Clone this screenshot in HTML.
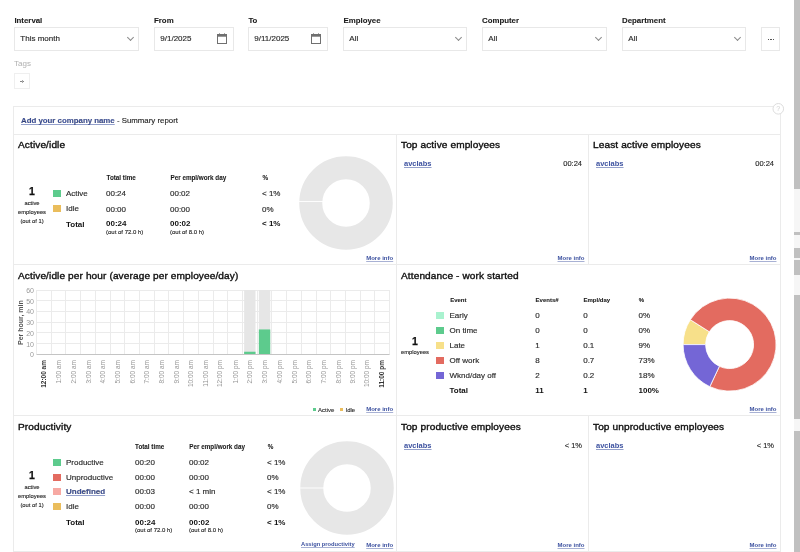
<!DOCTYPE html>
<html><head><meta charset="utf-8">
<style>
*{box-sizing:border-box;margin:0;padding:0}
html,body{width:800px;height:552px;overflow:hidden;background:#fff}
body{font-family:"Liberation Sans",sans-serif;color:#222;position:relative;-webkit-font-smoothing:antialiased}
#wrap{position:absolute;left:0;top:0;width:800px;height:552px;will-change:transform}
.a{position:absolute;white-space:nowrap;line-height:1}
.lbl{font-size:7.85px;font-weight:bold;color:#1a1a1a;-webkit-text-stroke:0.1px #1a1a1a}
.inp{position:absolute;top:27px;height:24px;border:1px solid #e8e8e8;background:#fff}
.chev{position:absolute;width:5px;height:5px;border-right:1px solid #8a8a8a;border-bottom:1px solid #8a8a8a;transform:rotate(45deg)}
.cal{position:absolute;width:10px;height:10.5px;border:1px solid #6a6a6a;border-top:3px solid #6a6a6a}
.box{position:absolute;border:1px solid #ebebeb}
.vl{position:absolute;width:1px;background:#ebebeb}
.hl{position:absolute;height:1px;background:#ebebeb}
.title{font-size:9px;color:#111;letter-spacing:0.1px;-webkit-text-stroke:0.35px #111;transform-origin:0 50%;transform:scaleX(1.12)}
.lnk{color:#3d52a0;font-weight:bold;text-decoration:underline;text-decoration-color:rgba(61,82,160,0.55)}
.mi{font-size:6px;font-weight:bold;color:#3d52a0;text-decoration:underline;text-decoration-color:rgba(61,82,160,0.45)}
.th{font-size:6.3px;font-weight:bold;color:#1a1a1a;-webkit-text-stroke:0.08px #1a1a1a}
.td{font-size:8px;color:#2a2a2a;-webkit-text-stroke:0.15px #2a2a2a}
.tb{font-size:8px;font-weight:bold;color:#111}
.sm{font-size:6px;color:#222;-webkit-text-stroke:0.12px #222}
.big{font-size:10.5px;font-weight:bold;color:#111;-webkit-text-stroke:0.25px #111}
.sq{position:absolute;width:8px;height:7px}
.yl{font-size:7px;color:#999}
.xl{position:absolute;width:0;height:0}
.xl span{position:absolute;right:0;top:0;transform-origin:100% 0;transform:rotate(-90deg);font-size:6.5px;color:#959595;line-height:7px;white-space:nowrap}
</style></head><body><div id="wrap">
<div class="a lbl" style="left:14.40px;top:16.69px;">Interval</div>
<div class="a lbl" style="left:154.00px;top:16.69px;">From</div>
<div class="a lbl" style="left:248.40px;top:16.69px;">To</div>
<div class="a lbl" style="left:343.50px;top:16.69px;">Employee</div>
<div class="a lbl" style="left:482.00px;top:16.69px;">Computer</div>
<div class="a lbl" style="left:622.00px;top:16.69px;">Department</div>
<div class="inp" style="left:14px;width:125px"></div>
<div class="a td" style="left:20.30px;top:35.00px;color:#2a2a2a">This month</div>
<div class="chev" style="left:127.5px;top:35.3px"></div>
<div class="inp" style="left:154px;width:80px"></div>
<div class="a td" style="left:160.30px;top:35.00px;color:#2a2a2a">9/1/2025</div>
<svg style="position:absolute;left:217px;top:32px" width="11" height="13"><rect x="0.5" y="2.5" width="9" height="9" fill="none" stroke="#707070" stroke-width="1"/><rect x="0" y="2" width="10" height="2.7" fill="#707070"/><rect x="2" y="1" width="1" height="1" fill="#aaa"/><rect x="7" y="1" width="1" height="1" fill="#aaa"/></svg>
<div class="inp" style="left:248px;width:80px"></div>
<div class="a td" style="left:254.30px;top:35.00px;color:#2a2a2a">9/11/2025</div>
<svg style="position:absolute;left:311px;top:32px" width="11" height="13"><rect x="0.5" y="2.5" width="9" height="9" fill="none" stroke="#707070" stroke-width="1"/><rect x="0" y="2" width="10" height="2.7" fill="#707070"/><rect x="2" y="1" width="1" height="1" fill="#aaa"/><rect x="7" y="1" width="1" height="1" fill="#aaa"/></svg>
<div class="inp" style="left:343px;width:124px"></div>
<div class="a td" style="left:349.30px;top:35.00px;color:#2a2a2a">All</div>
<div class="chev" style="left:455.5px;top:35.3px"></div>
<div class="inp" style="left:482px;width:125px"></div>
<div class="a td" style="left:488.30px;top:35.00px;color:#2a2a2a">All</div>
<div class="chev" style="left:595.5px;top:35.3px"></div>
<div class="inp" style="left:622px;width:124px"></div>
<div class="a td" style="left:628.30px;top:35.00px;color:#2a2a2a">All</div>
<div class="chev" style="left:734.5px;top:35.3px"></div>
<div class="inp" style="left:761px;width:19px"></div>
<div style="position:absolute;left:768px;top:38.6px;width:1.3px;height:1.3px;background:#555"></div>
<div style="position:absolute;left:770.3px;top:38.6px;width:1.3px;height:1.3px;background:#555"></div>
<div style="position:absolute;left:772.6px;top:38.6px;width:1.3px;height:1.3px;background:#555"></div>
<div class="a td" style="left:14.00px;top:60.00px;color:#b0b0b0;-webkit-text-stroke:0">Tags</div>
<div class="a" style="left:14px;top:73px;width:16px;height:16px;border:1px solid #efefef"></div>
<div style="position:absolute;left:20.3px;top:81px;width:3.6px;height:1px;background:#888"></div><div style="position:absolute;left:21.6px;top:80px;width:1px;height:2.6px;background:#aaa"></div>
<div class="box" style="left:13px;top:106px;width:768px;height:446px"></div>
<div class="hl" style="left:13px;top:134px;width:768px"></div>
<div class="a" style="left:21px;top:117.2px;font-size:7.85px;color:#222;-webkit-text-stroke:0.12px #222"><span class="lnk">Add your company name</span> - Summary report</div>
<svg style="position:absolute;left:771px;top:102px" width="15" height="15"><circle cx="7.3" cy="6.8" r="5.3" fill="#fff" stroke="#dcdcdc" stroke-width="1"/><text x="7.3" y="9.4" font-size="7" font-family="Liberation Sans" fill="#d0d0d0" text-anchor="middle">?</text></svg>
<div class="vl" style="left:396px;top:134px;height:418px"></div>
<div class="vl" style="left:588px;top:134px;height:130px"></div>
<div class="vl" style="left:588px;top:415px;height:137px"></div>
<div class="hl" style="left:13px;top:264px;width:768px"></div>
<div class="hl" style="left:13px;top:415px;width:768px"></div>
<div class="a title" style="left:18.00px;top:141.20px;">Active/idle</div>
<div class="a big" style="left:22.00px;width:20px;text-align:center;top:185.52px;">1</div>
<div class="a sm" style="left:10.00px;width:44px;text-align:center;top:200.77px;font-size:5.8px;">active</div>
<div class="a sm" style="left:10.00px;width:44px;text-align:center;top:209.67px;font-size:5.8px;">employees</div>
<div class="a sm" style="left:10.00px;width:44px;text-align:center;top:218.57px;font-size:5.8px;">(out of 1)</div>
<div class="sq" style="left:53px;top:189.7px;background:#5dcb8d"></div>
<div class="a td" style="left:66.00px;top:190.00px;">Active</div>
<div class="sq" style="left:53px;top:205.3px;background:#eabd5c"></div>
<div class="a td" style="left:66.00px;top:205.00px;">Idle</div>
<div class="a tb" style="left:66.00px;top:221.00px;">Total</div>
<div class="a th" style="left:106.50px;top:175.32px;">Total time</div>
<div class="a th" style="left:170.50px;top:175.32px;">Per empl/work day</div>
<div class="a th" style="left:262.50px;top:175.32px;">%</div>
<div class="a td" style="left:106.00px;top:190.00px;">00:24</div>
<div class="a td" style="left:106.00px;top:206.00px;">00:00</div>
<div class="a tb" style="left:106.00px;top:220.00px;">00:24</div>
<div class="a td" style="left:170.00px;top:190.00px;">00:02</div>
<div class="a td" style="left:170.00px;top:206.00px;">00:00</div>
<div class="a tb" style="left:170.00px;top:220.00px;">00:02</div>
<div class="a td" style="left:262.00px;top:190.00px;">&lt; 1%</div>
<div class="a td" style="left:262.00px;top:206.00px;">0%</div>
<div class="a tb" style="left:262.00px;top:220.00px;">&lt; 1%</div>
<div class="a sm" style="left:106.00px;top:228.97px;">(out of 72.0 h)</div>
<div class="a sm" style="left:170.00px;top:228.97px;">(out of 8.0 h)</div>
<svg style="position:absolute;left:296.3px;top:153.3px" width="100" height="100"><circle cx="50" cy="50" r="35.25" fill="none" stroke="#e7e7e7" stroke-width="23"/><line x1="2" y1="48.5" x2="27" y2="48.5" stroke="#fff" stroke-width="0.9"/></svg>
<div class="a mi" style="left:366.20px;top:255.27px;">More info</div>
<div class="a title" style="left:401.30px;top:141.20px;">Top active employees</div>
<div class="a lnk" style="left:404.00px;top:160.34px;font-size:7.5px;">avclabs</div>
<div class="a td" style="left:532.00px;width:50px;text-align:right;top:160.34px;font-size:7.5px;">00:24</div>
<div class="a mi" style="left:557.50px;top:255.27px;">More info</div>
<div class="a title" style="left:592.60px;top:141.20px;">Least active employees</div>
<div class="a lnk" style="left:596.00px;top:160.34px;font-size:7.5px;">avclabs</div>
<div class="a td" style="left:724.00px;width:50px;text-align:right;top:160.34px;font-size:7.5px;">00:24</div>
<div class="a mi" style="left:749.50px;top:255.27px;">More info</div>
<div class="a title" style="left:18.00px;top:272.40px;">Active/idle per hour (average per employee/day)</div>
<svg style="position:absolute;left:0;top:0" width="400" height="400"><line x1="36.5" y1="290.5" x2="389.6" y2="290.5" stroke="#ebebeb" stroke-width="1"/><line x1="36.5" y1="300.5" x2="389.6" y2="300.5" stroke="#ebebeb" stroke-width="1"/><line x1="36.5" y1="311.5" x2="389.6" y2="311.5" stroke="#ebebeb" stroke-width="1"/><line x1="36.5" y1="322.5" x2="389.6" y2="322.5" stroke="#ebebeb" stroke-width="1"/><line x1="36.5" y1="332.5" x2="389.6" y2="332.5" stroke="#ebebeb" stroke-width="1"/><line x1="36.5" y1="343.5" x2="389.6" y2="343.5" stroke="#ebebeb" stroke-width="1"/><line x1="36.5" y1="290.0" x2="36.5" y2="354.3" stroke="#ebebeb" stroke-width="1"/><line x1="51.5" y1="290.0" x2="51.5" y2="354.3" stroke="#ebebeb" stroke-width="1"/><line x1="65.5" y1="290.0" x2="65.5" y2="354.3" stroke="#ebebeb" stroke-width="1"/><line x1="80.5" y1="290.0" x2="80.5" y2="354.3" stroke="#ebebeb" stroke-width="1"/><line x1="95.5" y1="290.0" x2="95.5" y2="354.3" stroke="#ebebeb" stroke-width="1"/><line x1="110.5" y1="290.0" x2="110.5" y2="354.3" stroke="#ebebeb" stroke-width="1"/><line x1="124.5" y1="290.0" x2="124.5" y2="354.3" stroke="#ebebeb" stroke-width="1"/><line x1="139.5" y1="290.0" x2="139.5" y2="354.3" stroke="#ebebeb" stroke-width="1"/><line x1="154.5" y1="290.0" x2="154.5" y2="354.3" stroke="#ebebeb" stroke-width="1"/><line x1="168.5" y1="290.0" x2="168.5" y2="354.3" stroke="#ebebeb" stroke-width="1"/><line x1="183.5" y1="290.0" x2="183.5" y2="354.3" stroke="#ebebeb" stroke-width="1"/><line x1="198.5" y1="290.0" x2="198.5" y2="354.3" stroke="#ebebeb" stroke-width="1"/><line x1="213.5" y1="290.0" x2="213.5" y2="354.3" stroke="#ebebeb" stroke-width="1"/><line x1="227.5" y1="290.0" x2="227.5" y2="354.3" stroke="#ebebeb" stroke-width="1"/><line x1="242.5" y1="290.0" x2="242.5" y2="354.3" stroke="#ebebeb" stroke-width="1"/><line x1="257.5" y1="290.0" x2="257.5" y2="354.3" stroke="#ebebeb" stroke-width="1"/><line x1="271.5" y1="290.0" x2="271.5" y2="354.3" stroke="#ebebeb" stroke-width="1"/><line x1="286.5" y1="290.0" x2="286.5" y2="354.3" stroke="#ebebeb" stroke-width="1"/><line x1="301.5" y1="290.0" x2="301.5" y2="354.3" stroke="#ebebeb" stroke-width="1"/><line x1="316.5" y1="290.0" x2="316.5" y2="354.3" stroke="#ebebeb" stroke-width="1"/><line x1="330.5" y1="290.0" x2="330.5" y2="354.3" stroke="#ebebeb" stroke-width="1"/><line x1="345.5" y1="290.0" x2="345.5" y2="354.3" stroke="#ebebeb" stroke-width="1"/><line x1="360.5" y1="290.0" x2="360.5" y2="354.3" stroke="#ebebeb" stroke-width="1"/><line x1="374.5" y1="290.0" x2="374.5" y2="354.3" stroke="#ebebeb" stroke-width="1"/><line x1="389.5" y1="290.0" x2="389.5" y2="354.3" stroke="#ebebeb" stroke-width="1"/><rect x="244.13" y="290.0" width="11.4" height="64.30" fill="#e6e6e6"/><rect x="244.13" y="351.73" width="11.4" height="2.57" fill="#5dcb8d"/><rect x="258.84" y="290.0" width="11.4" height="64.30" fill="#e6e6e6"/><rect x="258.84" y="329.44" width="11.4" height="24.86" fill="#5dcb8d"/><line x1="36.5" y1="354.5" x2="389.6" y2="354.5" stroke="#c4c4c4" stroke-width="1"/></svg>
<div class="a yl" style="left:14.00px;width:20px;text-align:right;top:286.98px;">60</div>
<div class="a yl" style="left:14.00px;width:20px;text-align:right;top:297.70px;">50</div>
<div class="a yl" style="left:14.00px;width:20px;text-align:right;top:308.41px;">40</div>
<div class="a yl" style="left:14.00px;width:20px;text-align:right;top:319.13px;">30</div>
<div class="a yl" style="left:14.00px;width:20px;text-align:right;top:329.85px;">20</div>
<div class="a yl" style="left:14.00px;width:20px;text-align:right;top:340.56px;">10</div>
<div class="a yl" style="left:14.00px;width:20px;text-align:right;top:351.28px;">0</div>
<div class="xl" style="left:17px;top:345px"><span style="font-weight:bold;color:#555;font-size:7px;right:auto;left:0;transform-origin:0 0">Per hour, min</span></div>
<div class="xl" style="left:39.9px;top:360px"><span style="font-weight:bold;color:#333;">12:00 am</span></div>
<div class="xl" style="left:54.6px;top:360px"><span style="">1:00 am</span></div>
<div class="xl" style="left:69.3px;top:360px"><span style="">2:00 am</span></div>
<div class="xl" style="left:84.0px;top:360px"><span style="">3:00 am</span></div>
<div class="xl" style="left:98.7px;top:360px"><span style="">4:00 am</span></div>
<div class="xl" style="left:113.4px;top:360px"><span style="">5:00 am</span></div>
<div class="xl" style="left:128.1px;top:360px"><span style="">6:00 am</span></div>
<div class="xl" style="left:142.8px;top:360px"><span style="">7:00 am</span></div>
<div class="xl" style="left:157.6px;top:360px"><span style="">8:00 am</span></div>
<div class="xl" style="left:172.3px;top:360px"><span style="">9:00 am</span></div>
<div class="xl" style="left:187.0px;top:360px"><span style="">10:00 am</span></div>
<div class="xl" style="left:201.7px;top:360px"><span style="">11:00 am</span></div>
<div class="xl" style="left:216.4px;top:360px"><span style="">12:00 pm</span></div>
<div class="xl" style="left:231.1px;top:360px"><span style="">1:00 pm</span></div>
<div class="xl" style="left:245.8px;top:360px"><span style="">2:00 pm</span></div>
<div class="xl" style="left:260.5px;top:360px"><span style="">3:00 pm</span></div>
<div class="xl" style="left:275.3px;top:360px"><span style="">4:00 pm</span></div>
<div class="xl" style="left:290.0px;top:360px"><span style="">5:00 pm</span></div>
<div class="xl" style="left:304.7px;top:360px"><span style="">6:00 pm</span></div>
<div class="xl" style="left:319.4px;top:360px"><span style="">7:00 pm</span></div>
<div class="xl" style="left:334.1px;top:360px"><span style="">8:00 pm</span></div>
<div class="xl" style="left:348.8px;top:360px"><span style="">9:00 pm</span></div>
<div class="xl" style="left:363.5px;top:360px"><span style="">10:00 pm</span></div>
<div class="xl" style="left:378.2px;top:360px"><span style="font-weight:bold;color:#333;">11:00 pm</span></div>
<div class="sq" style="left:312.5px;top:407.8px;width:3px;height:3px;background:#5dcb8d"></div>
<div class="a sm" style="left:318.00px;top:406.57px;color:#333">Active</div>
<div class="sq" style="left:340px;top:407.8px;width:3px;height:3px;background:#eabd5c"></div>
<div class="a sm" style="left:345.50px;top:406.57px;color:#333">Idle</div>
<div class="a mi" style="left:366.20px;top:406.37px;">More info</div>
<div class="a title" style="left:401.20px;top:272.40px;">Attendance - work started</div>
<div class="a big" style="left:404.80px;width:20px;text-align:center;top:335.72px;">1</div>
<div class="a sm" style="left:395.00px;width:40px;text-align:center;top:349.87px;font-size:5.8px;">employees</div>
<div class="a th" style="left:450.20px;top:297.07px;font-size:6px;">Event</div>
<div class="a th" style="left:535.60px;top:297.07px;font-size:6px;">Events#</div>
<div class="a th" style="left:583.50px;top:297.07px;font-size:6px;">Empl/day</div>
<div class="a th" style="left:638.70px;top:297.07px;font-size:6px;">%</div>
<div class="sq" style="left:436px;top:312.2px;background:#a9f2cf"></div>
<div class="a td" style="left:449.50px;top:312.00px;">Early</div>
<div class="a td" style="left:535.20px;top:312.00px;">0</div>
<div class="a td" style="left:583.20px;top:312.00px;">0</div>
<div class="a td" style="left:638.50px;top:312.00px;">0%</div>
<div class="sq" style="left:436px;top:327.1px;background:#5dcb8d"></div>
<div class="a td" style="left:449.50px;top:327.00px;">On time</div>
<div class="a td" style="left:535.20px;top:327.00px;">0</div>
<div class="a td" style="left:583.20px;top:327.00px;">0</div>
<div class="a td" style="left:638.50px;top:327.00px;">0%</div>
<div class="sq" style="left:436px;top:342.0px;background:#f7e08a"></div>
<div class="a td" style="left:449.50px;top:342.00px;">Late</div>
<div class="a td" style="left:535.20px;top:342.00px;">1</div>
<div class="a td" style="left:583.20px;top:342.00px;">0.1</div>
<div class="a td" style="left:638.50px;top:342.00px;">9%</div>
<div class="sq" style="left:436px;top:357.2px;background:#e36b60"></div>
<div class="a td" style="left:449.50px;top:357.00px;">Off work</div>
<div class="a td" style="left:535.20px;top:357.00px;">8</div>
<div class="a td" style="left:583.20px;top:357.00px;">0.7</div>
<div class="a td" style="left:638.50px;top:357.00px;">73%</div>
<div class="sq" style="left:436px;top:371.9px;background:#7466d6"></div>
<div class="a td" style="left:449.50px;top:372.00px;">Wknd/day off</div>
<div class="a td" style="left:535.20px;top:372.00px;">2</div>
<div class="a td" style="left:583.20px;top:372.00px;">0.2</div>
<div class="a td" style="left:638.50px;top:372.00px;">18%</div>
<div class="a tb" style="left:449.50px;top:387.00px;">Total</div>
<div class="a tb" style="left:535.20px;top:387.00px;">11</div>
<div class="a tb" style="left:583.20px;top:387.00px;">1</div>
<div class="a tb" style="left:638.50px;top:387.00px;">100%</div>
<svg style="position:absolute;left:0;top:0" width="800" height="552"><path d="M683.10,344.60 A46.5,46.5 0 0 1 690.34,319.68 L709.34,331.74 A24,24 0 0 0 705.60,344.60 Z" fill="#f7e08a" stroke="#fff" stroke-width="0.8"/><path d="M690.34,319.68 A46.5,46.5 0 1 1 709.80,386.67 L719.38,366.32 A24,24 0 1 0 709.34,331.74 Z" fill="#e36b60" stroke="#fff" stroke-width="0.8"/><path d="M709.80,386.67 A46.5,46.5 0 0 1 683.10,344.60 L705.60,344.60 A24,24 0 0 0 719.38,366.32 Z" fill="#7466d6" stroke="#fff" stroke-width="0.8"/></svg>
<div class="a mi" style="left:749.50px;top:406.37px;">More info</div>
<div class="a title" style="left:18.00px;top:422.60px;">Productivity</div>
<div class="a big" style="left:22.00px;width:20px;text-align:center;top:470.12px;">1</div>
<div class="a sm" style="left:10.00px;width:44px;text-align:center;top:485.37px;font-size:5.8px;">active</div>
<div class="a sm" style="left:10.00px;width:44px;text-align:center;top:494.27px;font-size:5.8px;">employees</div>
<div class="a sm" style="left:10.00px;width:44px;text-align:center;top:503.17px;font-size:5.8px;">(out of 1)</div>
<div class="a th" style="left:135.00px;top:444.12px;">Total time</div>
<div class="a th" style="left:189.30px;top:444.12px;">Per empl/work day</div>
<div class="a th" style="left:267.70px;top:444.12px;">%</div>
<div class="sq" style="left:53px;top:458.9px;background:#5dcb8d"></div>
<div class="a td" style="left:66.00px;top:459.00px;">Productive</div>
<div class="a td" style="left:135.00px;top:459.00px;">00:20</div>
<div class="a td" style="left:189.00px;top:459.00px;">00:02</div>
<div class="a td" style="left:267.00px;top:459.00px;">&lt; 1%</div>
<div class="sq" style="left:53px;top:473.6px;background:#e36b60"></div>
<div class="a td" style="left:66.00px;top:474.00px;">Unproductive</div>
<div class="a td" style="left:135.00px;top:474.00px;">00:00</div>
<div class="a td" style="left:189.00px;top:474.00px;">00:00</div>
<div class="a td" style="left:267.00px;top:474.00px;">0%</div>
<div class="sq" style="left:53px;top:488.4px;background:#f7a9a3"></div>
<div class="a td" style="left:66.00px;top:488.00px;"><span class="lnk" style="font-size:8px">Undefined</span></div>
<div class="a td" style="left:135.00px;top:488.00px;">00:03</div>
<div class="a td" style="left:189.00px;top:488.00px;">&lt; 1 min</div>
<div class="a td" style="left:267.00px;top:488.00px;">&lt; 1%</div>
<div class="sq" style="left:53px;top:503.3px;background:#eabd5c"></div>
<div class="a td" style="left:66.00px;top:503.00px;">Idle</div>
<div class="a td" style="left:135.00px;top:503.00px;">00:00</div>
<div class="a td" style="left:189.00px;top:503.00px;">00:00</div>
<div class="a td" style="left:267.00px;top:503.00px;">0%</div>
<div class="a tb" style="left:66.00px;top:519.00px;">Total</div>
<div class="a tb" style="left:135.00px;top:519.00px;">00:24</div>
<div class="a tb" style="left:189.00px;top:519.00px;">00:02</div>
<div class="a tb" style="left:267.00px;top:519.00px;">&lt; 1%</div>
<div class="a sm" style="left:135.00px;top:526.97px;">(out of 72.0 h)</div>
<div class="a sm" style="left:189.00px;top:526.97px;">(out of 8.0 h)</div>
<svg style="position:absolute;left:296.5px;top:438.0px" width="100" height="100"><circle cx="50" cy="50" r="35.25" fill="none" stroke="#e7e7e7" stroke-width="23"/><line x1="2" y1="50" x2="27" y2="50" stroke="#fff" stroke-width="0.9"/></svg>
<div class="a mi" style="left:301.00px;top:541.79px;font-size:5.75px;">Assign productivity</div>
<div class="a mi" style="left:366.20px;top:541.67px;">More info</div>
<div class="a title" style="left:401.30px;top:422.70px;">Top productive employees</div>
<div class="a lnk" style="left:404.00px;top:441.84px;font-size:7.5px;">avclabs</div>
<div class="a td" style="left:532.00px;width:50px;text-align:right;top:441.84px;font-size:7.5px;">&lt; 1%</div>
<div class="a mi" style="left:557.50px;top:541.67px;">More info</div>
<div class="a title" style="left:592.60px;top:422.70px;">Top unproductive employees</div>
<div class="a lnk" style="left:596.00px;top:441.84px;font-size:7.5px;">avclabs</div>
<div class="a td" style="left:724.00px;width:50px;text-align:right;top:441.84px;font-size:7.5px;">&lt; 1%</div>
<div class="a mi" style="left:749.50px;top:541.67px;">More info</div>
<div style="position:absolute;left:794px;top:0;width:6px;height:552px;background:#f6f6f6"></div>
<div style="position:absolute;left:794px;top:0px;width:6px;height:189px;background:#c0c0c0"></div>
<div style="position:absolute;left:794px;top:232px;width:6px;height:3px;background:#c0c0c0"></div>
<div style="position:absolute;left:794px;top:248px;width:6px;height:10px;background:#c0c0c0"></div>
<div style="position:absolute;left:794px;top:260px;width:6px;height:15px;background:#c0c0c0"></div>
<div style="position:absolute;left:794px;top:295px;width:6px;height:124px;background:#c0c0c0"></div>
<div style="position:absolute;left:794px;top:431px;width:6px;height:121px;background:#c0c0c0"></div>
</div></body></html>
